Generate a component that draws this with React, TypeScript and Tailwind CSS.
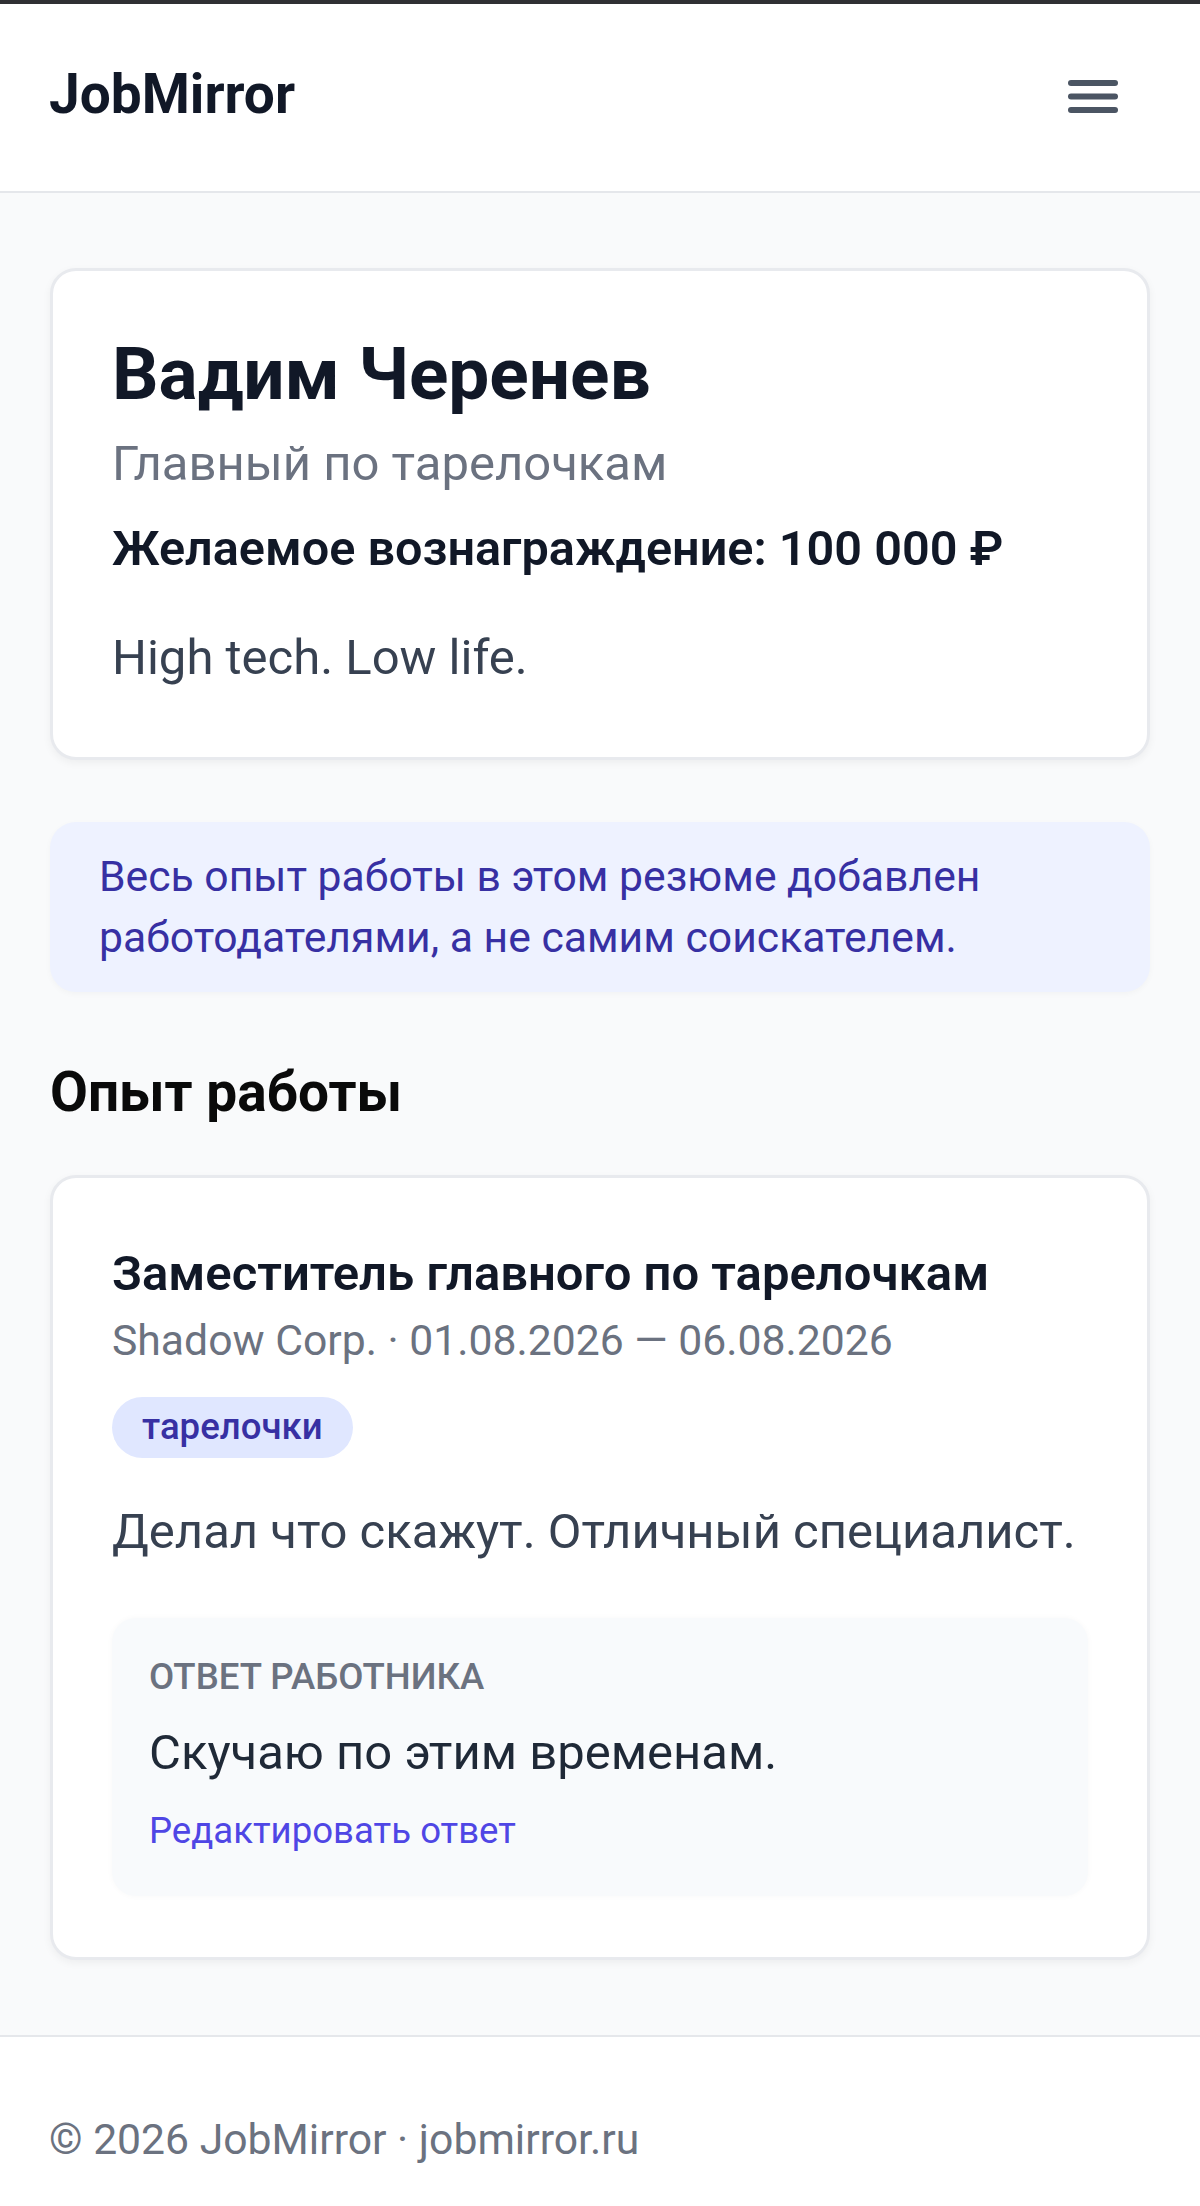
import React from 'react';

const font = { fontFamily: 'Roboto, "Noto Sans", sans-serif' };

const MenuIcon: React.FC = () => (
  <svg width="56" height="40" viewBox="0 0 56 40" fill="none">
    <line x1="6" y1="8" x2="50" y2="8" stroke="#4b5563" strokeWidth="6" strokeLinecap="round" />
    <line x1="6" y1="21.5" x2="50" y2="21.5" stroke="#4b5563" strokeWidth="6" strokeLinecap="round" />
    <line x1="6" y1="35" x2="50" y2="35" stroke="#4b5563" strokeWidth="6" strokeLinecap="round" />
  </svg>
);

export default function App() {
  return (
    <div className="min-h-screen bg-[#f9fafb] flex flex-col" style={font}>
      <div className="h-[4px] bg-[#2f3033]" />

      {/* header */}
      <header className="bg-white border-b-[2px] border-[#e5e7eb] pt-[48px] pb-[54px] pl-[49px] pr-[79px] flex items-center justify-between">
        <div className="text-[55px] leading-[85px] font-bold text-[#111827]">JobMirror</div>
        <MenuIcon />
      </header>

      <main className="flex-1 px-[50px] pt-[75px] pb-[75px]">
        {/* profile card */}
        <section className="bg-white border-[3px] border-[#e8eaee] rounded-[26px] shadow-[0_3px_8px_rgba(0,0,0,0.05)] px-[59px] pt-[61px] pb-[63px]">
          <h1 className="text-[73px] leading-[85px] font-bold text-[#111827]">Вадим Черенев</h1>
          <p className="mt-[10px] text-[49px] leading-[73px] text-[#6b7280]">Главный по тарелочкам</p>
          <p className="mt-[12px] text-[48.6px] leading-[73px] font-semibold text-[#111827]">
            Желаемое вознаграждение: 100 000 ₽
          </p>
          <p className="mt-[36px] text-[49px] leading-[73px] text-[#374151]">High tech. Low life.</p>
        </section>

        {/* notice */}
        <div className="mt-[62px] bg-[#eef2ff] rounded-[26px] shadow-[0_2px_6px_rgba(0,0,0,0.03)] px-[49px] py-[24px]">
          <p className="text-[42.7px] leading-[61px] text-[#3730a3]">
            Весь опыт работы в этом резюме добавлен работодателями, а не самим соискателем.
          </p>
        </div>

        <h2 className="mt-[58px] text-[55px] leading-[85px] font-bold text-[#0a0a0a]">Опыт работы</h2>

        {/* experience card */}
        <section className="mt-[40px] bg-white border-[3px] border-[#e8eaee] rounded-[26px] shadow-[0_3px_8px_rgba(0,0,0,0.05)] px-[59px] pt-[59px] pb-[61px]">
          <h3 className="text-[49px] leading-[73px] font-semibold text-[#111827]">
            Заместитель главного по тарелочкам
          </h3>
          <p className="text-[42.7px] leading-[61px] text-[#6b7280]">
            Shadow Corp. · 01.08.2026 — 06.08.2026
          </p>
          <div className="mt-[26px] flex">
            <span className="h-[61px] px-[30px] rounded-full bg-[#e0e7ff] text-[#3730a3] text-[36.6px] font-medium flex items-center">
              тарелочки
            </span>
          </div>
          <p className="mt-[37px] text-[49px] leading-[73px] text-[#374151]">
            Делал что скажут. Отличный специалист.
          </p>

          <div className="mt-[50px] bg-[#f8fafc] rounded-[24px] shadow-[0_0_6px_rgba(0,0,0,0.03)] px-[37px] pt-[34px] pb-[41px]">
            <p className="text-[36.6px] leading-[49px] font-medium uppercase text-[#6b7280]">Ответ работника</p>
            <p className="mt-[15px] text-[49px] leading-[73px] text-[#1f2937]">Скучаю по этим временам.</p>
            <a href="#" className="block mt-[17px] text-[36.6px] leading-[49px] text-[#4f46e5]">
              Редактировать ответ
            </a>
          </div>
        </section>
      </main>

      <footer className="bg-white border-t-[2px] border-[#e5e7eb] px-[49px] pt-[72px] pb-[73px]">
        <p className="text-[42.7px] leading-[61px] text-[#6b7280]">© 2026 JobMirror · jobmirror.ru</p>
      </footer>
    </div>
  );
}
